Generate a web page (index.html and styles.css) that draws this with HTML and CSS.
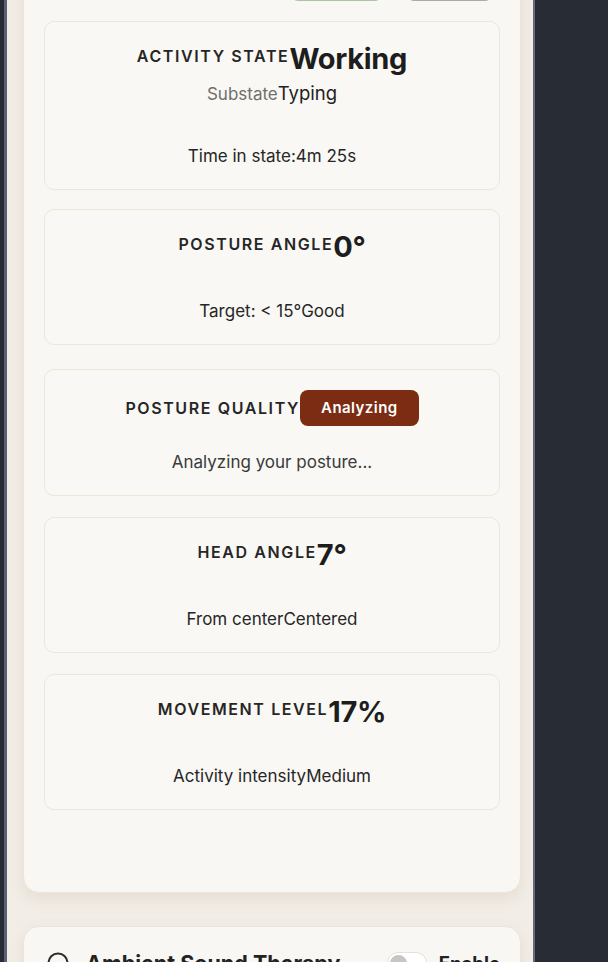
FILE: index.html
```html
<!DOCTYPE html>
<html lang="en">
<head>
<meta charset="utf-8">
<title>Posture Monitor</title>
<link rel="stylesheet" href="styles.css">
</head>
<body>
<div class="app">
  <main class="viewport">
    <section class="panel monitor">
      <div class="actions">
        <button class="btn btn-start" type="button" aria-label="Start"></button>
        <button class="btn btn-reset" type="button" aria-label="Reset"></button>
      </div>

      <div class="metric metric-activity">
        <div class="metric-head">
          <span class="label">Activity State</span><span class="value">Working</span>
        </div>
        <div class="sub"><span class="sub-label">Substate</span><span class="sub-value">Typing</span></div>
        <div class="foot foot-activity">Time in state:<span>4m 25s</span></div>
      </div>

      <div class="metric metric-angle">
        <div class="metric-head">
          <span class="label">Posture Angle</span><span class="value">0°</span>
        </div>
        <div class="foot">Target: &lt; 15°<span>Good</span></div>
      </div>

      <div class="metric metric-quality">
        <div class="metric-head">
          <span class="label label-mid">Posture Quality</span><span class="badge">Analyzing</span>
        </div>
        <div class="foot foot-quality">Analyzing your posture...</div>
      </div>

      <div class="metric">
        <div class="metric-head">
          <span class="label">Head Angle</span><span class="value">7°</span>
        </div>
        <div class="foot">From center<span>Centered</span></div>
      </div>

      <div class="metric">
        <div class="metric-head">
          <span class="label">Movement Level</span><span class="value">17%</span>
        </div>
        <div class="foot">Activity intensity<span>Medium</span></div>
      </div>
    </section>

    <section class="panel sound">
      <div class="sound-row">
        <svg class="sound-icon" width="24" height="24" viewBox="0 0 24 24" aria-hidden="true">
          <circle cx="12" cy="12" r="9.5" fill="none" stroke="#2a2a2a" stroke-width="2"/>
        </svg>
        <h2 class="sound-title">Ambient Sound Therapy</h2>
        <label class="toggle-wrap">
          <span class="toggle"><span class="knob"></span></span>
          <span class="toggle-text">Enable</span>
        </label>
      </div>
    </section>
  </main>
</div>
</body>
</html>
```

FILE: styles.css
```css
* { box-sizing: border-box; }

html, body {
  margin: 0;
  height: 962px;
  overflow: hidden;
}

body {
  background: #282c34;
  font-family: Inter, "Noto Sans", "Liberation Sans", sans-serif;
  color: #222;
}

.app {
  display: flex;
  height: 100%;
}

.viewport {
  margin-left: 4px;
  width: 531px;
  height: 100%;
  border-left: 3px solid #5a6177;
  border-right: 2px solid #646b80;
  background: #f2ede6;
  padding: 0 12px 0 16px;
  overflow: hidden;
}

.panel {
  background: #f9f7f3;
  border: 1px solid #eee3d6;
  border-radius: 16px;
  padding: 20px;
  box-shadow: 0 6px 16px rgba(140, 115, 80, 0.12);
}

.monitor {
  margin-top: -56px;
  padding-bottom: 82px;
}

.actions {
  display: flex;
  justify-content: flex-end;
  gap: 23px;
  padding-right: 7px;
  height: 36px;
}

.btn {
  height: 36px;
  border-radius: 8px;
  background: #f4f2ee;
  padding: 0;
}

.btn-start {
  width: 93px;
  border: 1px solid #a6c7a2;
  background: #eef4ec;
}

.btn-reset {
  width: 87px;
  border: 1px solid #ababab;
}

.metric {
  margin-top: 21px;
  background: #f9f8f4;
  border: 1px solid #efe5d9;
  border-radius: 10px;
  padding: 20px;
  text-align: center;
}

.metric-activity {
  margin-top: 20px;
}

.metric-angle {
  margin-top: 19px;
}

.metric-quality {
  margin-top: 24px;
}

.metric-head {
  display: flex;
  justify-content: center;
  align-items: flex-start;
}

.label {
  font-size: 16px;
  font-weight: 600;
  letter-spacing: 0.1em;
  text-transform: uppercase;
  line-height: 24px;
  padding-top: 2px;
  color: #262626;
}

.label-mid {
  padding-top: 6px;
}

.value {
  font-size: 29px;
  font-weight: 700;
  line-height: 34px;
  letter-spacing: -0.01em;
  color: #1d1d1d;
}

.badge {
  background: #7b2c13;
  color: #fff;
  font-size: 15px;
  font-weight: 600;
  letter-spacing: 0.03em;
  line-height: 20px;
  padding: 8px 21px;
  border-radius: 8px;
}

.sub {
  margin-top: 4px;
  font-size: 18.5px;
  line-height: 26px;
}

.sub-label {
  color: #6f6f6f;
  font-size: 17px;
}

.sub-value {
  color: #222;
}

.foot {
  margin-top: 34px;
  font-size: 17px;
  line-height: 26px;
  color: #262626;
}

.foot-activity {
  margin-top: 36px;
}

.foot-quality {
  margin-top: 23px;
  color: #3a3a3a;
}

.sound {
  margin-top: 33px;
  padding: 22px 20px;
  height: 200px;
}

.sound-row {
  display: flex;
  align-items: center;
  height: 28px;
}

.sound-icon {
  flex: none;
  margin-left: 2px;
}

.sound-title {
  margin: 0 0 0 16px;
  font-size: 21.5px;
  font-weight: 700;
  line-height: 28px;
  color: #222;
  flex: 1;
  white-space: nowrap;
}

.toggle-wrap {
  display: flex;
  align-items: center;
  gap: 12px;
}

.toggle {
  width: 40px;
  height: 22px;
  border-radius: 11px;
  background: #fff;
  border: 1px solid #e6e0d8;
  display: flex;
  align-items: center;
  padding: 0 2px;
}

.knob {
  width: 17px;
  height: 17px;
  border-radius: 50%;
  background: #c6c6c6;
}

.toggle-text {
  font-size: 18.5px;
  font-weight: 700;
  line-height: 28px;
  color: #222;
  white-space: nowrap;
}
```
